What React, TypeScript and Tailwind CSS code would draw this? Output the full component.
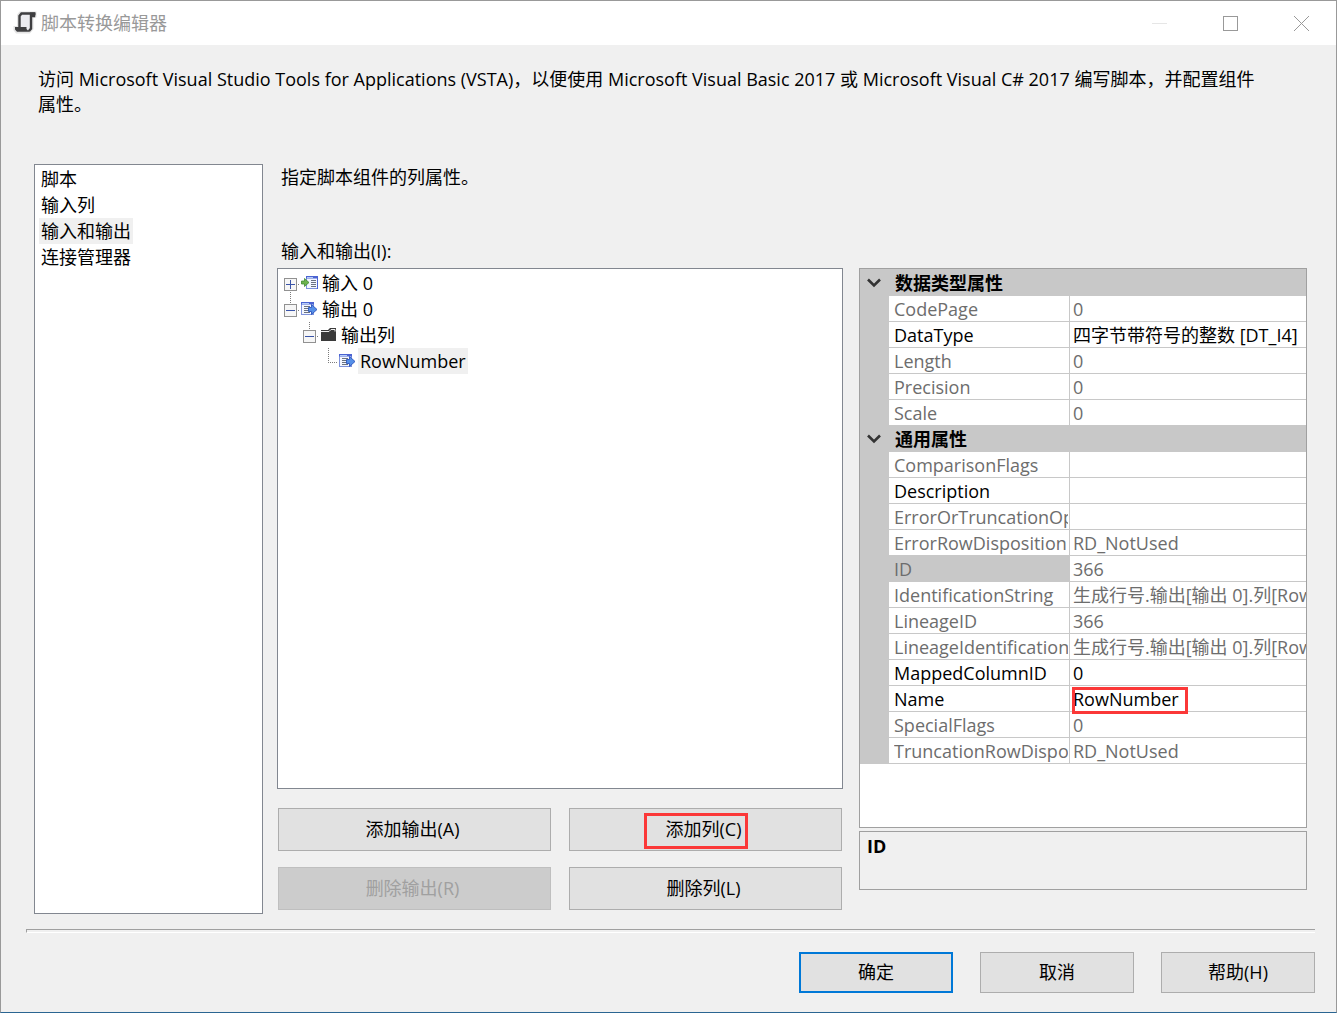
/**
 * Script transformation editor dialog: page list, inputs/outputs tree
 * and the property grid of the selected column.
 */

import { Fragment } from "react";
import type { ReactNode } from "react";
import clsx from "clsx";

interface Property {
  name: string;
  value: string;
  editable?: boolean;
  selected?: boolean;
  marked?: boolean;
}

interface Category {
  title: string;
  properties: Property[];
}

const PAGES = ["脚本", "输入列", "输入和输出", "连接管理器"];

const CATEGORIES: Category[] = [
  {
    title: "数据类型属性",
    properties: [
      { name: "CodePage", value: "0" },
      { name: "DataType", value: "四字节带符号的整数 [DT_I4]", editable: true },
      { name: "Length", value: "0" },
      { name: "Precision", value: "0" },
      { name: "Scale", value: "0" },
    ],
  },
  {
    title: "通用属性",
    properties: [
      { name: "ComparisonFlags", value: "" },
      { name: "Description", value: "", editable: true },
      { name: "ErrorOrTruncationOperation", value: "" },
      { name: "ErrorRowDisposition", value: "RD_NotUsed" },
      { name: "ID", value: "366", selected: true },
      { name: "IdentificationString", value: "生成行号.输出[输出 0].列[RowNumber]" },
      { name: "LineageID", value: "366" },
      { name: "LineageIdentificationString", value: "生成行号.输出[输出 0].列[RowNumber]" },
      { name: "MappedColumnID", value: "0", editable: true },
      { name: "Name", value: "RowNumber", editable: true, marked: true },
      { name: "SpecialFlags", value: "0" },
      { name: "TruncationRowDisposition", value: "RD_NotUsed" },
    ],
  },
];

function ScriptIcon() {
  return (
    <svg width="24" height="24" viewBox="0 0 24 24" aria-hidden="true">
      <path d="M7 1.500h15.500v4l-3 1V18l-3 3.500h-13L1.500 19v-3H5V4z" fill="#ececf0" stroke="#e4e4e4" strokeWidth="2" />
      <path d="M6.500 16V5L8.500 2.500h12.500V5H18v12.500L16 20" fill="none" stroke="#3f3f41" strokeWidth="2.400" />
      <path d="M2 16h11.500v2l1.500 1.500 1.500-1v2.200H4L2 18.500z" fill="#3f3f41" />
      <path d="M17 1.500h5.500V4L21 6h-4z" fill="#3f3f41" />
    </svg>
  );
}

function InputIcon() {
  return (
    <svg width="17" height="16" viewBox="0 0 17 16" aria-hidden="true">
      <rect x="5.500" y="1.500" width="11" height="12" fill="#f3f7ff" stroke="#7f93dc" />
      <path d="M5 1h12v2.500H5z" fill="#4b63d2" />
      <path d="M6 2h6v1H6z" fill="#b5cdf6" />
      <path d="M16.500 3v11" stroke="#4b63d2" />
      <path d="M10 5.500h5M10 7.500h5M10 9.500h5M10 11.500h5" stroke="#6b7280" />
      <path d="M0.500 6h3V3.500L8 7.500l-4.500 4V9h-3z" fill="#6db34f" stroke="#3f8a30" strokeWidth="0.800" />
    </svg>
  );
}

function OutputIcon() {
  return (
    <svg width="17" height="16" viewBox="0 0 17 16" aria-hidden="true">
      <rect x="0.500" y="1.500" width="12" height="12" fill="#f3f7ff" stroke="#7f93dc" />
      <path d="M0 1h13v2.500H0z" fill="#4b63d2" />
      <path d="M1 2h7v1H1z" fill="#b5cdf6" />
      <path d="M3 5.500h6M3 7.500h6M3 9.500h6M3 11.500h6" stroke="#6b7280" />
      <path d="M7.500 6.500h3V3.500L16 8.500l-5.500 5v-3h-3z" fill="#5590e8" stroke="#2b53bd" strokeWidth="0.900" />
    </svg>
  );
}

function FolderIcon() {
  return (
    <svg width="17" height="16" viewBox="0 0 17 16" aria-hidden="true">
      <path d="M1 3h7l2-2h6v13H1z" fill="#3a3a3a" />
      <path d="M1 4.500h8l2-2h4v2" fill="none" stroke="#f0f0f0" />
    </svg>
  );
}

interface TreeRowProps {
  level: number;
  label: string;
  icon: ReactNode;
  expander?: "plus" | "minus";
  lineAbove?: boolean;
  lineBelow?: boolean;
  selected?: boolean;
}

function TreeRow({ level, label, icon, expander, lineAbove, lineBelow, selected }: TreeRowProps) {
  const guide = (
    <svg width="19" height="26" viewBox="0 0 19 26" className="block" aria-hidden="true">
      <g stroke="#7c7c7c" strokeDasharray="1 1">
        {lineAbove && <path d="M9.500 0v15" />}
        {lineBelow && <path d="M9.500 14v12" />}
        <path d="M9 14.500h10" />
      </g>
      {expander && (
        <>
          <rect x="3.500" y="8.500" width="12" height="12" fill="#f6f6f6" stroke="#919191" />
          <path d={expander === "plus" ? "M5 14.500h9M9.500 10v9" : "M5 14.500h9"} stroke="#3a54a8" />
        </>
      )}
    </svg>
  );
  return (
    <li role="treeitem" aria-selected={!!selected} className="flex h-[26px] items-center">
      {Array.from({ length: level }, (_, i) => (
        <span key={i} className="w-[19px]" />
      ))}
      {expander ? (
        <button type="button" aria-label={label}>
          {guide}
        </button>
      ) : (
        guide
      )}
      <span className="w-5 pl-px">{icon}</span>
      <span className={clsx("h-[26px] px-[2px]", selected && "bg-[#f0f0f0]")}>{label}</span>
    </li>
  );
}

function PropertyGrid() {
  return (
    <div className="flex-1 overflow-hidden border border-[#a0a0a0] bg-white">
      <table className="w-full table-fixed border-separate border-spacing-0 whitespace-nowrap">
        <colgroup>
          <col className="w-[29px]" />
          <col className="w-[181px]" />
          <col />
        </colgroup>
        <tbody>
          {CATEGORIES.map((category, i) => (
            <Fragment key={category.title}>
              <tr className={clsx("bg-[#c8c8c8]", i === 0 ? "h-[27px]" : "h-[26px]")}>
                <td className="p-0">
                  <button type="button" aria-label={category.title} className="flex w-[27px] justify-center">
                    <svg width="14" height="10" viewBox="0 0 14 10" aria-hidden="true">
                      <path d="M1 1.500l6 6 6-6" fill="none" stroke="#333" strokeWidth="2.600" />
                    </svg>
                  </button>
                </td>
                <th colSpan={2} className="p-0 pl-[6px] text-left font-bold">
                  {category.title}
                </th>
              </tr>
              {category.properties.map((p) => (
                <tr key={p.name} className={clsx("h-[26px]", p.editable ? "text-black" : "text-[#6d6d6d]")}>
                  <td className="bg-[#c8c8c8] p-0" />
                  <th
                    scope="row"
                    className={clsx(
                      "overflow-hidden border-r border-b border-[#c8c8c8] p-0 pr-px pl-[5px] text-left font-normal",
                      p.selected && "bg-[#c8c8c8]",
                    )}
                  >
                    <div className="h-[25px] overflow-hidden">{p.name}</div>
                  </th>
                  <td className="border-b border-[#c8c8c8] p-0 pl-[3px]">
                    {p.marked ? (
                      <div className="relative h-[25px] w-fit pr-2">
                        {p.value}
                        <span className="absolute top-px -right-px -bottom-[3px] -left-px border-[3px] border-[#fb3838]" />
                      </div>
                    ) : (
                      <div className="h-[25px] overflow-hidden">{p.value}</div>
                    )}
                  </td>
                </tr>
              ))}
            </Fragment>
          ))}
        </tbody>
      </table>
    </div>
  );
}

interface DialogButtonProps {
  children: ReactNode;
  className?: string;
  disabled?: boolean;
}

function DialogButton({ children, className = "border border-[#adadad] pr-1 pb-px", disabled }: DialogButtonProps) {
  return (
    <button
      type="button"
      disabled={disabled}
      className={clsx("relative bg-[#e1e1e1] disabled:border-[#bfbfbf] disabled:bg-[#ccc] disabled:text-[#a0a0a0]", className)}
    >
      {children}
    </button>
  );
}

export default function App() {
  return (
    <div className="flex min-h-screen flex-col border border-[#999] border-b-[#2a6592] bg-[#f0f0f0] font-['Open_Sans','Noto_Sans_CJK_SC',sans-serif] text-[18px] leading-[26px] text-black">
      <header className="flex h-11 items-center bg-white pb-px text-[#999]">
        <div className="flex flex-1 items-center gap-1 pl-3">
          <ScriptIcon />
          <h1>脚本转换编辑器</h1>
        </div>
        <button type="button" aria-label="最小化" disabled className="flex w-[71px] justify-center">
          <svg width="16" height="16" viewBox="0 0 16 16">
            <path d="M1 8.500h15" stroke="#e6e6e6" />
          </svg>
        </button>
        <button type="button" aria-label="最大化" className="flex w-[71px] justify-center">
          <svg width="16" height="16" viewBox="0 0 16 16">
            <rect x="1.500" y="1.500" width="14" height="14" fill="none" stroke="#999" />
          </svg>
        </button>
        <button type="button" aria-label="关闭" className="flex w-[71px] justify-center">
          <svg width="16" height="16" viewBox="0 0 16 16">
            <path d="M1 1l15 15M16 1L1 16" stroke="#999" />
          </svg>
        </button>
      </header>

      <p className="h-[119px] pt-[22px] pr-16 pl-[37px] leading-[25px]">
        访问 Microsoft Visual Studio Tools for Applications (VSTA)，以便使用 Microsoft Visual Basic 2017 或 Microsoft Visual C# 2017 编写脚本，并配置组件属性。
      </p>

      <main className="flex flex-1 gap-[14px] pr-[29px] pl-[33px]">
        <nav className="w-[229px] border border-[#828790] bg-white p-1 pt-px">
          <ul>
            {PAGES.map((page) => (
              <li key={page} className="flex h-[26px]">
                <button type="button" className={clsx("px-[2px]", page === "输入和输出" && "bg-[#f0f0f0]")}>
                  {page}
                </button>
              </li>
            ))}
          </ul>
        </nav>

        <section className="flex min-w-0 flex-1 flex-col">
          <p className="pl-1">指定脚本组件的列属性。</p>
          <h2 id="tree-label" className="mt-12 mb-1 pl-1">
            输入和输出(I):
          </h2>
          <div className="grid flex-1 grid-cols-[566fr_448fr] gap-4">
            <div className="flex min-w-0 flex-col">
              <ul role="tree" aria-labelledby="tree-label" className="flex-1 border border-[#828790] bg-white pt-px pl-[3px]">
                <TreeRow level={0} label="输入 0" icon={<InputIcon />} expander="plus" lineBelow />
                <TreeRow level={0} label="输出 0" icon={<OutputIcon />} expander="minus" lineAbove />
                <TreeRow level={1} label="输出列" icon={<FolderIcon />} expander="minus" lineAbove />
                <TreeRow level={2} label="RowNumber" icon={<OutputIcon />} lineAbove selected />
              </ul>
              <div className="mt-[19px] mb-1 grid auto-rows-[43px] grid-cols-2 gap-x-[18px] gap-y-4 px-px">
                <DialogButton>添加输出(A)</DialogButton>
                <DialogButton>
                  添加列(C)
                  <span className="absolute top-1 left-[74px] h-9 w-[104px] border-[3px] border-[#fb3838]" />
                </DialogButton>
                <DialogButton disabled>删除输出(R)</DialogButton>
                <DialogButton>删除列(L)</DialogButton>
              </div>
            </div>
            <div className="mb-6 flex min-w-0 flex-col gap-[3px]">
              <PropertyGrid />
              <div className="h-[59px] border border-[#a0a0a0] pt-px pl-[7px] font-bold">ID</div>
            </div>
          </div>
        </section>
      </main>

      <footer className="pt-[15px] pr-[21px] pb-[19px] pl-[25px]">
        <div className="h-1 border-t border-b border-l border-t-[#a0a0a0] border-b-white border-l-[#a0a0a0]" />
        <div className="mt-[19px] flex justify-end gap-[27px]">
          <DialogButton className="h-[41px] w-[154px] border-2 border-[#0078d7] pb-px">确定</DialogButton>
          <DialogButton className="h-[41px] w-[154px] border border-[#adadad] pb-px">取消</DialogButton>
          <DialogButton className="h-[41px] w-[154px] border border-[#adadad] pb-px">帮助(H)</DialogButton>
        </div>
      </footer>
    </div>
  );
}
